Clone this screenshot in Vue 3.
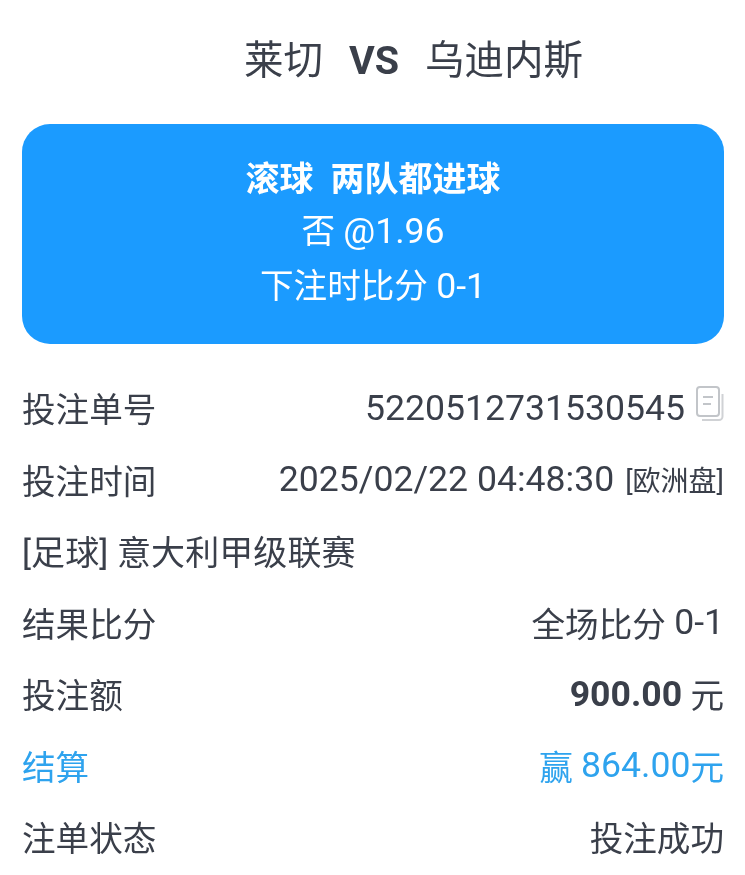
<script setup>
const rows = [
  { label: '结果比分', text: '全场比分', num: '0-1' },
]
</script>

<template>
  <div class="page">
    <div class="match">莱切<b class="vs">VS</b>乌迪内斯</div>
    <div class="card">
      <div class="card-title">滚球&nbsp;&nbsp;两队都进球</div>
      <div class="card-line">否 <span class="num">@1.96</span></div>
      <div class="card-line">下注时比分 <span class="num">0-1</span></div>
    </div>
    <div class="list">
      <div class="row">
        <span>投注单号</span>
        <span class="val">
          <span class="num">5220512731530545</span>
          <svg class="copy" width="28" height="35" viewBox="0 0 28 35" fill="none" stroke="#c2c5c9" stroke-width="2">
            <rect x="1" y="1" width="22" height="29" rx="3" />
            <path d="M26.5 8v22.5a3.5 3.5 0 0 1-3.5 3.5H6" stroke="#d0d2d5" />
            <path d="M7 11h10M7 18h8" />
          </svg>
        </span>
      </div>
      <div class="row">
        <span>投注时间</span>
        <span class="val"><span class="num">2025/02/22 04:48:30</span><small class="market">[欧洲盘]</small></span>
      </div>
      <div class="row league"><span>[足球] 意大利甲级联赛</span></div>
      <div class="row" v-for="r in rows" :key="r.label">
        <span>{{ r.label }}</span>
        <span class="val">{{ r.text }}&nbsp;<span class="num">{{ r.num }}</span></span>
      </div>
      <div class="row">
        <span>投注额</span>
        <span class="val"><b class="num">900.00</b>&nbsp;元</span>
      </div>
      <div class="row win">
        <span>结算</span>
        <span class="val">赢&nbsp;<span class="num">864.00</span>元</span>
      </div>
      <div class="row">
        <span>注单状态</span>
        <span class="val">投注成功</span>
      </div>
    </div>
  </div>
</template>

<style>
html, body { margin: 0; background: #fff; }
</style>

<style scoped>
.page {
  width: 745px;
  height: 875px;
  overflow: hidden;
  box-sizing: border-box;
  padding: 0 21px 0 22px;
  font-family: Roboto, "Noto Sans CJK SC", sans-serif;
  color: #3a3f4a;
  filter: blur(0.4px);
}
.match {
  height: 124px;
  padding: 38px 0 0 81px;
  box-sizing: border-box;
  text-align: center;
  font-size: 39.5px;
  line-height: 46px;
}
.vs { margin: 0 26px; font-size: 39.5px; }
.card {
  height: 220px;
  box-sizing: border-box;
  padding-top: 30px;
  border-radius: 28px;
  background: #1b9bff;
  color: #fff;
  text-align: center;
}
.card-title { font-size: 34px; font-weight: 700; line-height: 50px; }
.card-line { font-size: 33.6px; line-height: 54px; }
.list { padding-top: 28px; }
.row {
  display: flex;
  justify-content: space-between;
  align-items: center;
  height: 71.5px;
  font-size: 33.6px;
}
.league { font-size: 34px; letter-spacing: 0.1px; }
.val { display: flex; align-items: center; white-space: pre; }
.num { font-size: 35.6px; }
.market { font-size: 28px; margin-left: 11px; }
.copy { margin: -8px 0 0 11px; }
.win { color: #2ea3ee; }
</style>
